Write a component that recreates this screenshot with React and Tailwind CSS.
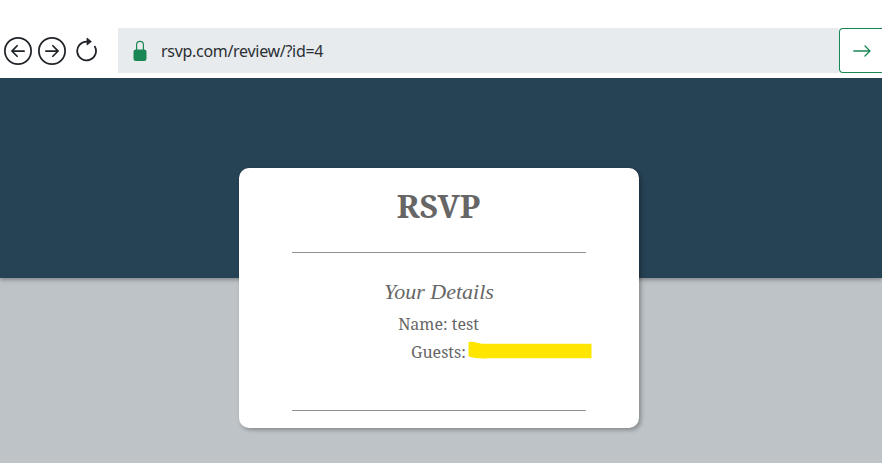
import React from 'react';
import { BsArrowLeftCircle, BsArrowRightCircle } from 'react-icons/bs';

const serif = "font-['Noto_Serif','Droid_Serif','DejaVu_Serif_Condensed','DejaVu_Serif',serif]";

function BrowserBar() {
  return (
    <div className="relative flex h-[78px] items-start bg-white pt-7 text-[#212529]">
      <div className="flex h-[45px] w-[118px] shrink-0 items-center pl-1">
        <BsArrowLeftCircle size={28} />
        <BsArrowRightCircle size={28} className="ml-1.5" />
        <svg className="mb-0.5 ml-2.5" width="22" height="26" viewBox="0 0 22 26" fill="none">
          <path d="M10.7 4.6A9.4 9.4 0 1 0 18.9 9.6" stroke="currentColor" strokeWidth="1.8" strokeLinecap="round" />
          <path d="M11 1v7L15.4 4.6Z" fill="currentColor" stroke="currentColor" strokeWidth=".8" strokeLinejoin="round" />
        </svg>
      </div>
      <div className="flex h-[45px] grow items-center bg-[#e7ebee] pl-[15px]">
        <svg width="14" height="22" viewBox="0 0 14 22" fill="none">
          <path d="M3.6 10V4.8a3.4 3.4 0 0 1 6.8 0V10" stroke="#198754" strokeWidth="1.2" />
          <rect x="0.5" y="9.5" width="13" height="11.5" rx="2.3" fill="#198754" />
        </svg>
        <span className="ml-[14px] font-['Noto_Sans',sans-serif] text-base tracking-[-0.3px] text-[#2b2f33]">rsvp.com/review/?id=4</span>
      </div>
      <div className="flex h-[45px] w-[43px] shrink-0 items-center rounded-l border border-r-0 border-[#198754] pl-[13px] text-[#198754]">
        <svg width="18" height="14" viewBox="0 0 18 14" fill="none" stroke="currentColor" strokeWidth="1.3" strokeLinecap="round" strokeLinejoin="round">
          <path d="M.8 7h16M12 2l5 5-5 5" />
        </svg>
      </div>
    </div>
  );
}

function Rule() {
  return <div className="h-px w-[294px] bg-[#919191]" />;
}

function DetailsCard() {
  return (
    <div className={`flex h-[260px] w-[400px] flex-col items-center rounded-[10px] bg-white text-[#666] shadow-[2px_2px_4px_rgba(0,0,0,0.3)] ${serif}`}>
      <h1 className="mr-px mt-4 h-[44px] text-[32px] font-bold leading-[44px]">RSVP</h1>
      <div className="mt-6"><Rule /></div>
      <h2 className="mt-[24px] h-[30px] whitespace-nowrap font-['Z003','URW_Chancery_L','Monotype_Corsiva','Liberation_Serif',serif] text-[22px] italic leading-[30px]">Your Details</h2>
      <div className="mr-px mt-[3px] h-7 text-base leading-7">Name: test</div>
      <div className="flex h-7 w-full items-center pl-[172px] text-base">
        <span className="w-[57px] whitespace-nowrap">Guests:</span>
        <svg className="mb-1" width="124" height="18" viewBox="0 0 124 18">
          <path d="M.5 1Q5 .2 9 1.7L14 2.7H123.5V17.2H20Q9 18 .5 15.5Z" fill="#ffe600" />
        </svg>
      </div>
      <div className="mt-[44px]"><Rule /></div>
    </div>
  );
}

export default function App() {
  return (
    <div className="h-[463px] w-[882px] overflow-hidden bg-[#bdc3c7]">
      <BrowserBar />
      <div className="h-[200px] bg-[#264255] pl-[239px] pt-[90px] shadow-[0_2px_4px_rgba(0,0,0,0.3)]">
        <DetailsCard />
      </div>
    </div>
  );
}
